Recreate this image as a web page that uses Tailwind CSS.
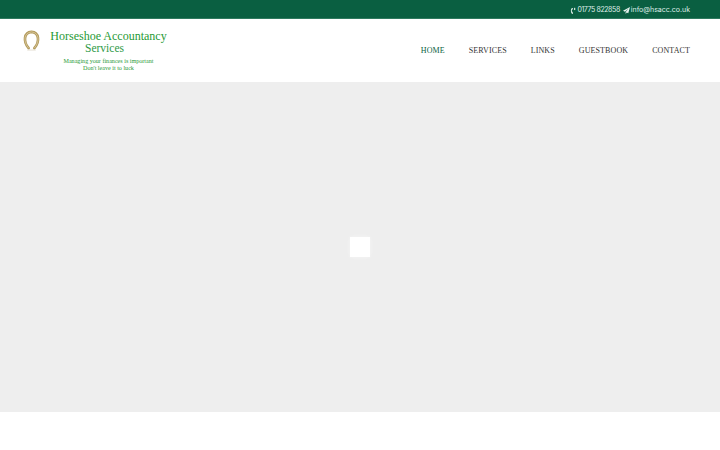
<!DOCTYPE html>
<html lang="en">
<head>
    <meta charset="UTF-8">
    <meta name="viewport" content="width=device-width, initial-scale=1.0">
    <title>Horseshoe Accountancy Services</title>
    <script src="https://cdn.jsdelivr.net/npm/@tailwindcss/browser@4"></script>
</head>
<body class="bg-white h-[450px] overflow-hidden">
    <!-- top bar -->
    <div class="h-[19px] pt-[3px] bg-[#0a5f41] border-b border-[#2f7a5f] flex items-center justify-end gap-[3px] pr-[30px] text-[7px] text-[#dfeee8] font-['Inter',sans-serif]">
        <span class="flex items-center gap-[1px] tracking-[-0.4px]">
            <svg class="w-[6px] h-[8px]" viewBox="0 0 7 9" fill="#e6f2ee"><path d="M2.2 1 C0.6 2.4 0.6 6 2.4 8 L3.6 7.4 L2.9 5.5 L2.3 5.5 C2 4.6 2 3.6 2.3 2.9 L3 2.9 L3.4 1 Z"/><rect x="4.8" y="0.8" width="1.3" height="2.6"/></svg>
            01775 822858
        </span>
        <span class="flex items-center gap-[1px]">
            <svg class="w-[7px] h-[7px]" viewBox="0 0 8 8" fill="#e6f2ee"><path d="M8 0 L0 4.4 L2.2 5.3 L6.4 1.6 L3 5.7 L3 8 L4.3 6.4 L6 7.2 Z"/></svg>
            info@hsacc.co.uk
        </span>
    </div>

    <!-- header -->
    <header class="h-[63px] flex items-center justify-between pr-[30px]">
        <div class="flex items-start pl-[22px] mb-[1px]">
            <svg class="w-[19px] h-[21px] mt-[1px] shrink-0" viewBox="0 0 19 22" fill="none">
                <path d="M6.5 19 C0.5 12 1.5 2.5 9.5 2 C17.5 2.5 18.5 12 12.5 19" stroke="#b39a5c" stroke-width="2.8" stroke-linecap="round"/>
                <path d="M6.5 19 C0.5 12 1.5 2.5 9.5 2 C17.5 2.5 18.5 12 12.5 19" stroke="#e2d6b0" stroke-width="0.7"/>
                <path d="M5 21 H14" stroke="#e4e0d2" stroke-width="1"/>
            </svg>
            <div class="w-[126px] text-center text-[#1f9a35] font-['Liberation_Serif',serif]">
                <div class="text-[12px] leading-[13px] mt-[1.5px] ml-[9px] whitespace-nowrap">Horseshoe Accountancy</div>
                <div class="text-[11.5px] leading-[12px] text-[#2f9a48] mt-[-1px] ml-[1px]">Services</div>
                <div class="text-[6.1px] leading-[7px] mt-[3.5px] ml-[9px] whitespace-nowrap">Managing your finances is important</div>
                <div class="text-[6.1px] leading-[7px] ml-[9px]">Don't leave it to luck</div>
            </div>
        </div>
        <nav class="flex items-center gap-[24px] text-[8px] tracking-[0.1px] text-[#333] font-['Liberation_Serif',serif]">
            <a class="text-[#0a5f41]">HOME</a>
            <a>SERVICES</a>
            <a>LINKS</a>
            <a>GUESTBOOK</a>
            <a>CONTACT</a>
        </nav>
    </header>

    <!-- slider placeholder -->
    <main class="h-[330px] bg-[#eeeeee] flex items-center justify-center">
        <div class="w-[20px] h-[20px] bg-white shadow-[0_0_4px_rgba(255,255,255,0.5)]"></div>
    </main>
</body>
</html>
